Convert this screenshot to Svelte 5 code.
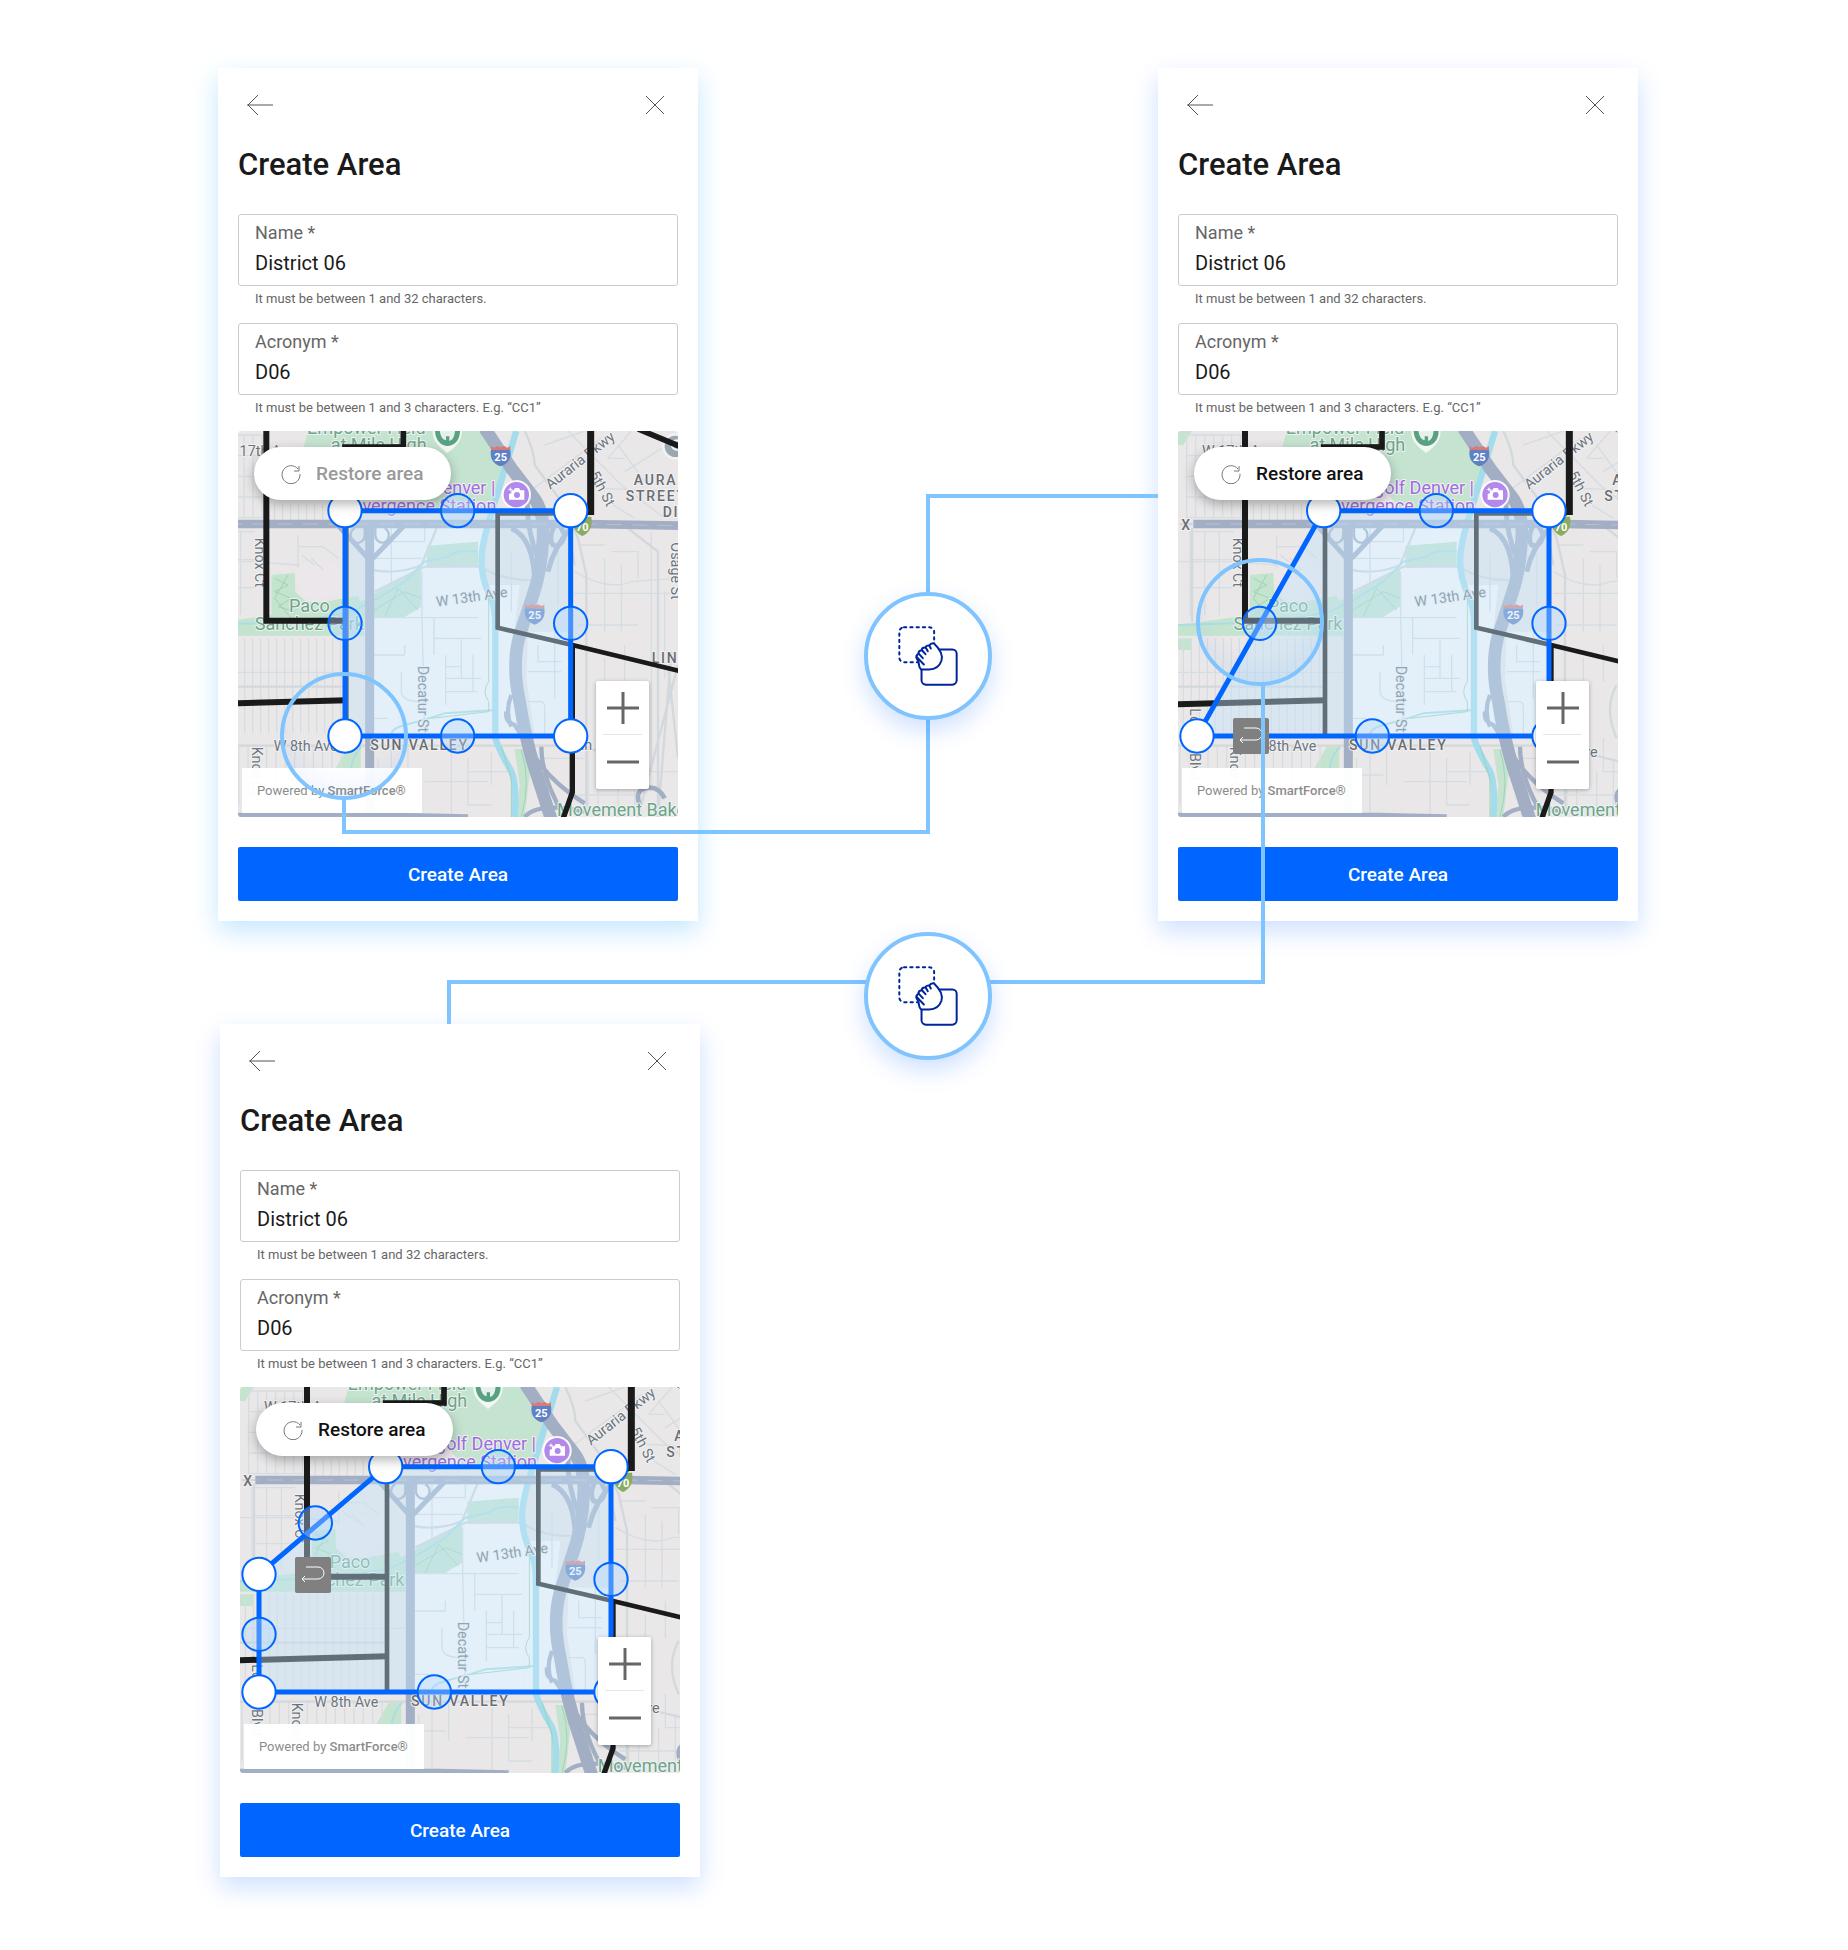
<script>
  const screens = [
    {
      id: 'start',
      place: 'first',
      disabled: true,
      viewBox: '140 18 1320 1158',
      corners: [[461, 257], [1138, 257], [1138, 933], [461, 933]],
      middles: [[799, 257], [1138, 595], [799, 933], [461, 595]],
    },
    {
      id: 'corner',
      place: 'second',
      disabled: false,
      viewBox: '24 18 1320 1158',
      corners: [[461, 257], [1137, 257], [1137, 933], [81, 933]],
      middles: [[799, 257], [1137, 595], [607, 933], [269, 595]],
      undo: 'low',
    },
    {
      id: 'edge',
      place: 'third',
      disabled: false,
      viewBox: '24 18 1320 1158',
      corners: [[461, 257], [1137, 257], [1137, 933], [81, 933], [81, 580]],
      middles: [[799, 257], [1137, 595], [607, 933], [81, 760], [250, 426]],
      undo: 'high',
    },
  ];

  const points = (list) => list.map((p) => p.join(',')).join(' ');

  // Residential blocks: evenly spaced streets inside a rectangle.
  const streets = (x1, y1, x2, y2, dx, dy) => {
    let d = '';
    for (let x = x1; dx && x <= x2; x += dx) d += `M${x} ${y1}V${y2}`;
    for (let y = y1; dy && y <= y2; y += dy) d += `M${x1} ${y}H${x2}`;
    return d;
  };

  const minor =
    streets(40, 640, 450, 925, 24, 0) +
    streets(30, 960, 470, 1140, 28, 0) +
    streets(50, 30, 220, 280, 27, 62) +
    streets(250, 235, 400, 285, 24, 0) +
    streets(60, 320, 190, 570, 44, 84);
</script>

{#snippet dragIcon()}
  <svg class="drag" viewBox="144 137 181 181" aria-hidden="true">
    <rect x="148" y="141" width="105" height="105" rx="14" stroke-dasharray="7 12" />
    <rect x="215" y="208" width="106" height="106" rx="13" />
    <path class="hand" d="M214 268C206 262 207 252 206 244L200 234Q197 226 205 221Q206 211 215 210Q217 201 226 202Q229 195 238 196Q243 188 252 189C268 204 281 222 275 242C269 260 254 268 238 268Z" />
    <path d="M201 231L222 253M207 221L219 234M217 211L227 222M228 203L234 213M239 197L243 205" />
  </svg>
{/snippet}

{#snippet shield(x, y)}
  <g transform={`translate(${x} ${y})`}>
    <path d="M-29 -17H29C34 12 18 26 0 32C-18 26 -34 12 -29 -17Z" fill="#5e80c4" />
    <path d="M-29 -17V-28L-20 -24L-10 -29L0 -25L10 -29L20 -24L29 -28V-17Z" fill="#d97a76" />
    <text class="shield" x="0" y="15" text-anchor="middle">25</text>
  </g>
{/snippet}

{#snippet cityMap(screen)}
  <svg class="city" viewBox={screen.viewBox} role="img" aria-label="Map of Sun Valley with the area outline">
    <rect x="0" y="0" width="1480" height="1200" fill="#e9e7e8" />
    <rect x="548" y="310" width="330" height="620" fill="#fcf9f9" />
    <path d="M878 480H985L960 700L985 930H878Z" fill="#fcf9f9" />
    <path d="M1010 620H1130V930H1030L1005 760Z" fill="#f9f6f8" />

    <g fill="#c5e4d0">
      <path d="M350 18H900L945 130L905 250H690L640 190L470 180L330 90Z" />
      <path d="M24 18H66L40 60H24Z" />
      <path d="M240 450L310 444L312 500L345 530H400L500 512L520 560V632H24V600L240 570Z" />
      <path d="M480 545L690 425V545L640 576H500Z" />
      <path d="M706 362L860 350V424L706 428Z" />
      <path d="M970 972H1000L1015 1050L1000 1176H975L985 1080Z" />
      <path d="M470 965H508V1035H430Z" />
      <path d="M200 1166H300V1176H200Z" />
      <path d="M24 640H66V675H24Z" />
    </g>
    <path d="M312 440C320 500 345 530 390 520C430 515 470 480 455 440C430 400 350 390 312 440Z" fill="#ebe7ea" />

    <g class="minor">
      <path d={minor} />
      <path d="M24 742H520M24 410H190L320 420M320 330V430M320 365H395L440 400M330 390L370 420M395 435L360 400" />
      <path d="M692 440V570L700 930M548 578H860M728 580V690M728 640H870M763 690V840M548 690H640M640 690V660M763 760H870M810 640V760M763 725H810M600 310V500M548 400H692M600 350H700V310M590 880H548M630 740V800Q632 830 690 830M763 800H860M845 690V800" />
      <path d="M1010 830H1050Q1060 830 1060 850V930M1040 660V710H1110M1090 620V820M1010 740H1110M1060 640H1130M960 385V560M1100 350V540" />
      <path d="M600 1176V970M640 1050H560M560 1000V1176M780 980V1070H890M830 1000V1140H900M830 1040H960M700 1070H780V1176M650 970V1080M900 980V1080" />
      <path d="M1040 1000H1180M1190 970V1176M1220 1000V1176M1280 1040V1176M1160 1110H1340M1300 940V1040H1460M1330 1000V1176" />
      <path d="M1150 505H1460M1240 400V620M1290 420V620M1150 440Q1250 500 1320 470L1460 460M1160 360H1240M1260 380H1340V460M1380 320V1040M1420 500V760M1160 600H1340M1240 700V770M1300 660V770" />
      <path d="M960 240L1230 40M1060 60L1180 18M1130 18L1290 180L1420 280M1250 100H1300M1300 140L1460 40M1250 230L1330 280M1320 18L1250 100M1280 60L1360 170M1240 190L1460 200" />
    </g>
    <g class="middle-roads">
      <path d="M24 785H460M24 962H1150M66 310V590M545 435Q620 450 690 420L740 300M550 500L700 425H870Q930 470 1050 465M1150 420L1130 310M1000 18Q1030 80 1030 120L1110 230L1160 340L1185 450V1176M1310 310L1400 380V1176M1460 720L1340 1176M1440 680L1400 1176M1430 720L1460 1000M1340 780Q1300 850 1340 940M1150 960L1350 1010" />
    </g>

    <path class="river" d="M975 18L935 150L905 250Q885 310 875 360Q860 440 895 510Q912 545 912 600V940Q925 980 955 1030Q978 1065 970 1176" />
    <g class="creek">
      <path d="M860 380Q800 370 770 395L700 410L640 470L560 520L480 560L330 590L24 600" />
      <path d="M912 855L760 865Q700 885 640 900Q600 910 600 930" />
      <path d="M480 1030Q480 1000 510 965" />
    </g>
    <g class="trail">
      <path d="M892 500V770Q870 800 892 830V860L720 880M930 965L960 1060V1176M990 975Q1020 1070 990 1176M540 560L640 500L690 520M580 575L620 490L680 555M250 460L290 480L250 500L300 520L260 545L310 560M290 450L250 520L300 580" />
    </g>

    <g class="highway">
      <path d="M70 297H1180L1460 302" stroke-width="26" />
      <path d="M535 290V1176" stroke-width="27" />
      <path d="M880 10L960 130L1025 215Q1060 260 1055 340Q1050 440 1025 510L985 630Q960 720 985 830Q1005 960 1040 1060L1082 1190" stroke-width="38" />
      <path d="M440 300L530 400M640 300L545 400" stroke-width="15" />
      <path d="M490 310A24 24 0 0 0 490 352A22 22 0 0 0 520 330V305M580 310A24 24 0 0 1 580 352A22 22 0 0 1 552 330V305" stroke-width="7" />
      <path d="M960 310Q1030 340 1030 480M1010 200Q1000 300 1040 400M1145 300Q1085 370 1070 440M1090 300Q1070 340 1085 360Q1110 370 1120 330L1105 300" stroke-width="15" />
      <path d="M945 860Q940 890 970 900L1010 960Q1060 1060 1180 1135M1050 965Q1050 1060 1120 1176M1000 1176Q1040 1130 1180 1160M960 810Q940 860 960 905" stroke-width="13" />
      <path d="M24 1170H620L830 1175M1345 1140Q1330 1100 1360 1090Q1400 1080 1420 1120" stroke-width="14" />
    </g>
    <path d="M30 297H1180L1460 302" class="lane" />

    <g class="street-name">
      <text x="96" y="92">W 17th Ave</text>
      <text transform="translate(190 338) rotate(90)">Knox Ct</text>
      <text transform="translate(736 545) rotate(-8)">W 13th Ave</text>
      <text transform="translate(679 722) rotate(90)">Decatur St</text>
      <text x="247" y="977">W 8th Ave</text>
      <text transform="translate(181 965) rotate(90)">Knox Ct</text>
      <text transform="translate(60 850) rotate(90)">Lowell Blvd</text>
      <text transform="translate(1077 194) rotate(-38)">Auraria Pkwy</text>
      <text transform="translate(1194 148) rotate(62)">5th St</text>
      <text transform="translate(1440 352) rotate(90)">Osage St</text>
      <text x="1168" y="975">in</text>
      <text x="1246" y="997">re</text>
    </g>
    <g class="park-name">
      <text x="525" y="26" text-anchor="middle">Empower Field</text>
      <text x="562" y="78" text-anchor="middle">at Mile High</text>
      <text x="354" y="560" text-anchor="middle">Paco</text>
      <text x="354" y="614" text-anchor="middle">Sanchez Park</text>
      <text x="1097" y="1174">Movement Bakery</text>
    </g>
    <g class="venue-name">
      <text x="912" y="208" text-anchor="end">Topgolf Denver |</text>
      <text x="915" y="260" text-anchor="end">Convergence Station</text>
    </g>
    <g class="district-name">
      <text x="537" y="976">SUN VALLEY</text>
      <text x="1327" y="181">AURARIA</text>
      <text x="1303" y="228">STREET</text>
      <text x="1414" y="276">DISTRICT</text>
      <text x="1381" y="713">LINCOLN</text>
      <text x="34" y="315">X</text>
    </g>

    {@render shield(928, 92)}
    {@render shield(1030, 567)}
    <g>
      <path d="M1146 275H1200C1206 310 1190 325 1173 333C1156 325 1140 310 1146 275Z" fill="#8aab62" />
      <text class="shield" x="1173" y="318" text-anchor="middle">70</text>
    </g>
    <g>
      <circle cx="975" cy="209" r="44" fill="#fff" opacity="0.9" />
      <circle cx="975" cy="209" r="38" fill="#b388eb" />
      <path fill="#fff" fill-rule="evenodd" d="M960 196H967L971 189H983L987 196H999V224H953V207L960 204ZM977 201A9 9 0 1 0 977 219A9 9 0 1 0 977 201Z" />
      <path fill="#fff" d="M957 185L959 191L965 193L959 195L957 201L955 195L949 193L955 191Z" />
    </g>
    <g>
      <path d="M724 18C722 52 750 68 768 84C788 68 812 52 812 18Z" fill="#f3f6f3" />
      <path d="M731 18C732 48 752 63 768 63C786 63 806 48 806 18Z" fill="#58a183" />
      <path d="M745 18Q750 45 764 46V34H774V48Q788 46 791 18Z" fill="#fff" opacity="0.85" />
    </g>
    <circle cx="1452" cy="64" r="36" fill="#9aa7b3" stroke="#f2f2f2" stroke-width="8" />
    <circle cx="1456" cy="60" r="14" fill="none" stroke="#f2f2f2" stroke-width="7" />

    <g class="border">
      <path d="M225 10V587H463" stroke-width="18" />
      <path d="M636 10V66H461V74" stroke-width="17" />
      <path d="M1198 10V270" stroke-width="21" />
      <path d="M1190 265H919V608L1143 660L1470 739" stroke-width="14" />
      <path d="M465 265V930" stroke-width="14" />
      <path d="M1143 660V1102L1112 1190" stroke-width="16" />
      <path d="M20 838L465 826" stroke-width="18" />
      <path d="M1340 12L1470 66" stroke-width="17" />
    </g>

    <polygon class="area" points={points(screen.corners)} />
    {#each screen.middles as [x, y]}
      <circle class="middle" cx={x} cy={y} r="50" />
    {/each}
    {#each screen.corners as [x, y]}
      <circle class="corner" cx={x} cy={y} r="50" />
    {/each}
  </svg>
{/snippet}

<main class="canvas">
  {#each screens as screen}
    <form class={`card ${screen.place}`} onsubmit={(e) => e.preventDefault()}>
      <header>
        <button type="button" class="icon" aria-label="Back">
          <svg viewBox="0 0 28 28"><path d="M1 14H27M12 4L2 14L12 24" /></svg>
        </button>
        <button type="button" class="icon" aria-label="Close">
          <svg viewBox="0 0 28 28"><path d="M4 5L22 23M22 5L4 23" /></svg>
        </button>
      </header>
      <h1>Create Area</h1>

      <div class="fields">
        <div class="field">
          <div class="box">
            <label for={`name-${screen.id}`}>Name *</label>
            <input id={`name-${screen.id}`} type="text" value="District 06" />
          </div>
          <p>It must be between 1 and 32 characters.</p>
        </div>
        <div class="field">
          <div class="box">
            <label for={`acronym-${screen.id}`}>Acronym *</label>
            <input id={`acronym-${screen.id}`} type="text" value="D06" />
          </div>
          <p>It must be between 1 and 3 characters. E.g. “CC1”</p>
        </div>
      </div>

      <div class="map">
        {@render cityMap(screen)}
        {#if screen.undo}
          <button type="button" class={`undo ${screen.undo}`} aria-label="Undo">
            <svg viewBox="0 0 36 36"><path d="M11 10H23A6 6 0 0 1 23 22H7M10 19L7 22L10 25" /></svg>
          </button>
        {/if}
        <button type="button" class="restore" disabled={screen.disabled}>
          <svg viewBox="0 0 20 20"><path d="M17 5A9 9 0 1 0 19 10M18 2V7H13" /></svg>
          Restore area
        </button>
        <div class="powered">Powered by <b>SmartForce®</b></div>
        <div class="zoom">
          <button type="button" aria-label="Zoom in"><svg viewBox="0 0 32 32"><path d="M0 16H32M16 0V32" /></svg></button>
          <button type="button" aria-label="Zoom out"><svg viewBox="0 0 32 32"><path d="M0 16H32" /></svg></button>
        </div>
      </div>

      <button type="submit" class="submit">Create Area</button>
    </form>
  {/each}

  <svg class="links" width="1848" height="1950" viewBox="0 0 1848 1950" aria-hidden="true">
    <defs>
      <radialGradient id="halo" cx="50%" cy="35%" r="66%">
        <stop offset="60%" stop-color="#0066ff" stop-opacity="0" />
        <stop offset="100%" stop-color="#0066ff" stop-opacity="0.06" />
      </radialGradient>
    </defs>
    <circle cx="344" cy="736" r="62" fill="url(#halo)" />
    <circle cx="1260" cy="622" r="62" fill="url(#halo)" />
    <path d="M344 798V832H928V496H1158" />
    <path d="M1263 684V982H449V1024" />
  </svg>

  <div class="node upper">{@render dragIcon()}</div>
  <div class="node lower">{@render dragIcon()}</div>
</main>

<style>
  :global(body) {
    margin: 0;
    background: #fff;
  }

  .canvas {
    position: relative;
    min-height: 1950px;
    overflow: hidden;
    font-family: Roboto, 'Liberation Sans', sans-serif;
    color: #1a1a1a;
  }

  button,
  input {
    font: inherit;
    color: inherit;
    margin: 0;
    padding: 0;
    border: 0;
    background: none;
  }

  svg {
    display: block;
    fill: none;
  }

  .card {
    position: absolute;
    box-sizing: border-box;
    width: 480px;
    padding: 20px;
    background: #fff;
    box-shadow: 0 10px 24px rgba(0, 102, 255, 0.2);
  }

  .first {
    left: 218px;
    top: 68px;
    box-shadow: 0 10px 24px rgba(70, 180, 255, 0.32);
  }

  .second {
    left: 1158px;
    top: 68px;
  }

  .third {
    left: 220px;
    top: 1024px;
  }

  header {
    display: flex;
    justify-content: space-between;
    padding: 3px 8px;
  }

  .icon svg {
    width: 28px;
    height: 28px;
    stroke: #555;
    stroke-width: 1;
  }

  h1 {
    margin: 24px 0 30px;
    font-size: 31px;
    line-height: 38px;
    font-weight: 500;
  }

  .fields {
    display: grid;
    gap: 11px;
    margin-bottom: 10px;
  }

  .box {
    display: flex;
    flex-direction: column;
    box-sizing: border-box;
    height: 72px;
    padding: 7px 16px;
    border: 1px solid #ccc;
    border-radius: 3px;
  }

  label {
    font-size: 18px;
    line-height: 22px;
    color: #666;
  }

  input {
    width: 100%;
    height: 28px;
    margin-top: 5px;
    font-size: 20px;
    line-height: 28px;
  }

  .field p {
    margin: 4px 0 0 17px;
    padding-bottom: 4px;
    font-size: 13px;
    line-height: 18px;
    color: #666;
  }

  .map {
    position: relative;
    margin-bottom: 30px;
    border-radius: 3px;
    overflow: hidden;
  }

  .city {
    width: 100%;
    height: auto;
  }

  .minor path {
    stroke: #d5dde2;
    stroke-width: 4;
  }

  .middle-roads path {
    stroke: #d3d8dc;
    stroke-width: 7;
  }

  .river {
    stroke: #a2dced;
    stroke-width: 19;
  }

  .creek path {
    stroke: #a9dde2;
    stroke-width: 6;
  }

  .trail path {
    stroke: #9fd3b5;
    stroke-width: 3;
  }

  .highway path {
    stroke: #a2aec4;
  }

  .lane {
    stroke: #b7c1d2;
    stroke-width: 3;
    stroke-dasharray: 46 30;
  }

  .city text {
    paint-order: stroke;
    stroke: #f1f1f1;
    stroke-width: 6;
    stroke-linejoin: round;
  }

  .street-name text {
    font-size: 43px;
    fill: #6b7480;
  }

  .park-name text {
    font-size: 54px;
    fill: #6aa58a;
  }

  .venue-name text {
    font-size: 54px;
    fill: #9d6ede;
  }

  .district-name text {
    font-size: 42px;
    font-weight: 500;
    letter-spacing: 0.13em;
    fill: #6a6d72;
  }

  .city .shield {
    font-size: 33px;
    font-weight: 700;
    fill: #fff;
    stroke: none;
  }

  .border path {
    stroke: #1a1a1a;
  }

  .area {
    fill: rgba(195, 228, 250, 0.42);
    stroke: #06f;
    stroke-width: 15;
  }

  .middle {
    fill: rgba(180, 216, 255, 0.38);
    stroke: #06f;
    stroke-width: 6;
  }

  .corner {
    fill: #fff;
    stroke: #06f;
    stroke-width: 6;
  }

  .restore {
    position: absolute;
    left: 16px;
    top: 16px;
    display: flex;
    align-items: center;
    gap: 15px;
    height: 53px;
    padding: 0 28px 0 27px;
    border-radius: 27px;
    background: #fff;
    box-shadow: 0 4px 12px rgba(0, 0, 0, 0.3);
    font-size: 19px;
    font-weight: 500;
    color: #111;
    white-space: nowrap;
  }

  .restore:disabled {
    color: #999;
  }

  .restore svg {
    width: 20px;
    height: 20px;
    stroke: #777;
    stroke-width: 1;
  }

  .undo {
    position: absolute;
    left: 55px;
    width: 36px;
    height: 36px;
    border-radius: 2px;
    background: #808080;
  }

  .undo svg {
    stroke: #fff;
    stroke-width: 1;
  }

  .low {
    top: 287px;
  }

  .high {
    top: 170px;
  }

  .powered {
    position: absolute;
    left: 4px;
    bottom: 4px;
    padding: 0 16px 0 15px;
    background: rgba(255, 255, 255, 0.97);
    font-size: 13px;
    line-height: 45px;
    color: #8c8c8c;
    white-space: nowrap;
  }

  .powered b {
    font-weight: 500;
  }

  .zoom {
    position: absolute;
    right: 29px;
    bottom: 28px;
    width: 53px;
    border-radius: 2px;
    background: #fff;
    box-shadow: 0 1px 4px rgba(0, 0, 0, 0.3);
  }

  .zoom button {
    display: grid;
    place-items: center;
    width: 100%;
    height: 54px;
  }

  .zoom button + button::before {
    content: '';
    position: absolute;
    top: 53px;
    left: 7px;
    right: 7px;
    border-top: 1px solid #e6e6e6;
  }

  .zoom svg {
    width: 32px;
    height: 32px;
    stroke: #666;
    stroke-width: 3;
  }

  .submit {
    width: 100%;
    height: 54px;
    border-radius: 2px;
    background: #06f;
    color: #fff;
    font-size: 19px;
    font-weight: 500;
  }

  .links {
    position: absolute;
    left: 0;
    top: 0;
    pointer-events: none;
  }

  .links path,
  .links circle {
    stroke: #80c4ff;
    stroke-width: 4;
  }

  .node {
    position: absolute;
    left: 864px;
    display: grid;
    place-items: center;
    box-sizing: border-box;
    width: 128px;
    height: 128px;
    border: 4px solid #80c4ff;
    border-radius: 50%;
    background: #fff;
    box-shadow: 0 10px 24px rgba(0, 102, 255, 0.2);
  }

  .upper {
    top: 592px;
  }

  .lower {
    top: 932px;
  }

  .drag {
    width: 60px;
    height: 60px;
    stroke: #00259a;
    stroke-width: 6;
    stroke-linecap: round;
    stroke-linejoin: round;
  }

  .hand {
    fill: #fff;
  }
</style>
